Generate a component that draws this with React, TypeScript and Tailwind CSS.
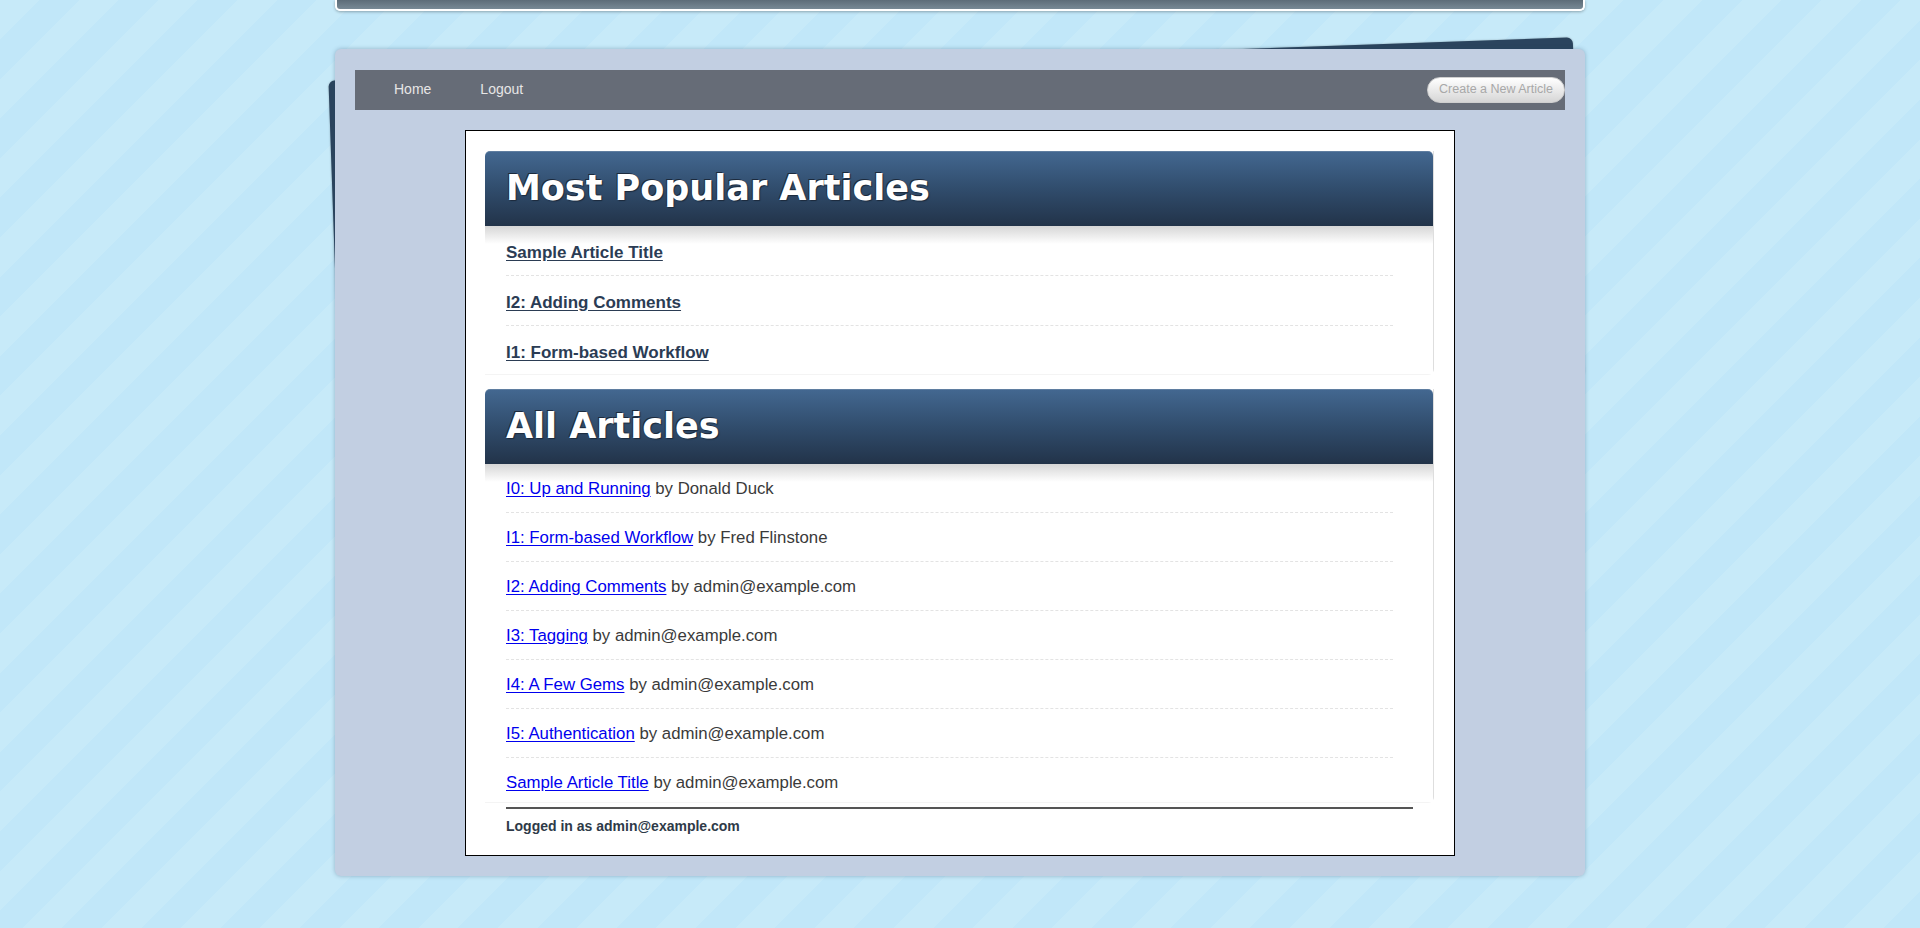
const popular = ["Sample Article Title", "I2: Adding Comments", "I1: Form-based Workflow"];

const articles = [
  { title: "I0: Up and Running", author: "Donald Duck" },
  { title: "I1: Form-based Workflow", author: "Fred Flinstone" },
  { title: "I2: Adding Comments", author: "admin@example.com" },
  { title: "I3: Tagging", author: "admin@example.com" },
  { title: "I4: A Few Gems", author: "admin@example.com" },
  { title: "I5: Authentication", author: "admin@example.com" },
  { title: "Sample Article Title", author: "admin@example.com" },
];

function SectionHeader({ title }: { title: string }) {
  return (
    <div className="h-[75px] flex items-center pl-[21px] rounded-t-[5px] bg-[linear-gradient(to_bottom,#436891,#2f4a69_55%,#223349)] shadow-[inset_0_1px_0_rgba(255,255,255,0.15)]">
      <h2 className="font-['DejaVu_Sans',sans-serif] font-bold text-[35px] text-white [text-shadow:-1px_-1px_0_#1c2a3c,1px_1px_1px_#1c2a3c]">
        {title}
      </h2>
    </div>
  );
}

export default function App() {
  return (
    <div className="min-h-screen w-full bg-[repeating-linear-gradient(135deg,#c7eaf9_0_28px,#c1e7f9_28px_56px)] font-['Liberation_Sans',Arial,sans-serif] overflow-hidden">
      <div className="w-[1250px] mx-auto pb-[52px]">
        {/* Top bar */}
        <div className="h-[11px] rounded-b-[5px] border-x-2 border-b-2 border-white bg-[linear-gradient(to_bottom,#5c6c78,#778995)] shadow-[0_1px_3px_rgba(0,0,0,0.3)]" />

        {/* Panel with back sheet */}
        <div className="relative mt-[38px]">
          <div className="absolute left-[-1px] top-[10px] w-[1245px] h-[340px] -rotate-2 rounded-md bg-[#2b445e] shadow-[0_0_2px_rgba(0,0,0,0.3)]" />

          <div className="relative rounded-[6px] bg-[#c2cfe2] shadow-[0_0_4px_rgba(40,70,100,0.35)] pt-[21px] px-[20px] pb-[20px]">
            {/* Nav */}
            <div className="h-[40px] bg-[#666c77] flex items-center pl-[39px]">
              <div className="flex gap-[49px] pb-[1px] text-[14px] text-[#e6e6e6]">
                <a href="#">Home</a>
                <a href="#">Logout</a>
              </div>
              <button className="ml-auto h-[26px] -mt-[1px] px-[11px] rounded-full border border-[#cfcfcf] bg-[linear-gradient(to_bottom,#ffffff,#d6d6d6)] text-[12.5px] text-[#a8a8a8]">
                Create a New Article
              </button>
            </div>

            {/* Content box */}
            <div className="mt-[20px] mx-auto w-[990px] bg-white border border-black pt-[20px] pl-[19px] pr-[20px] pb-[18px]">
              {/* Most Popular */}
              <div className="w-[949px] rounded-br-[6px] border-r border-b border-r-[#dedede] border-b-[#f4f4f4]">
                <SectionHeader title="Most Popular Articles" />
                <ul className="bg-[linear-gradient(to_bottom,#d6d6d6,#ffffff_18px)]">
                  {popular.map((t, i) => (
                    <li
                      key={t}
                      className={`ml-[21px] mr-[40px] pt-[15px] leading-[23px] text-[17px] ${
                        i < popular.length - 1 ? "pb-[11px] border-b border-dashed border-[#e3e3e3]" : "pb-[10px]"
                      }`}
                    >
                      <a href="#" className="font-bold text-[#2b3c54] underline underline-offset-2">
                        {t}
                      </a>
                    </li>
                  ))}
                </ul>
              </div>

              {/* All Articles */}
              <div className="mt-[14px] w-[949px] rounded-br-[6px] border-r border-b border-r-[#dedede] border-b-[#f4f4f4]">
                <SectionHeader title="All Articles" />
                <ul className="bg-[linear-gradient(to_bottom,#d6d6d6,#ffffff_18px)]">
                  {articles.map((a, i) => (
                    <li
                      key={a.title}
                      className={`ml-[21px] mr-[40px] pt-[13px] leading-[24px] text-[16.8px] text-[#3a3a3a] ${
                        i < articles.length - 1 ? "pb-[11px] border-b border-dashed border-[#e3e3e3]" : "pb-[7px]"
                      }`}
                    >
                      <a href="#" className="text-[#0000ee] underline underline-offset-2">
                        {a.title}
                      </a>{" "}
                      by {a.author}
                    </li>
                  ))}
                </ul>
              </div>

              {/* Footer */}
              <div className="mx-[21px] mt-[4px] border-t-2 border-[#555]" />
              <p className="ml-[21px] mt-[7px] text-[14px] font-bold text-[#2e3a48]">
                Logged in as admin@example.com
              </p>
            </div>
          </div>
        </div>
      </div>
    </div>
  );
}
